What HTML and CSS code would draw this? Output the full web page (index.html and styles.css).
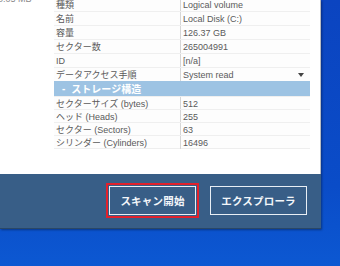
FILE: index.html
```html
<!DOCTYPE html>
<html lang="ja">
<head>
<meta charset="utf-8">
<link rel="stylesheet" href="styles.css">
</head>
<body>
<div class="window">
  <div class="content">
    <div class="side"><span class="size">0.05 MB</span></div>
    <div class="props">
      <div class="row top"><div class="k">種類</div><div class="v">Logical volume</div></div>
      <div class="row top"><div class="k">名前</div><div class="v">Local Disk (C:)</div></div>
      <div class="row top"><div class="k">容量</div><div class="v">126.37 GB</div></div>
      <div class="row top"><div class="k">セクター数</div><div class="v">265004991</div></div>
      <div class="row top"><div class="k">ID</div><div class="v">[n/a]</div></div>
      <div class="row top"><div class="k">データアクセス手順</div><div class="v sel">System read<svg class="arrow" width="6" height="4" viewBox="0 0 6 4"><path d="M0 0h6L3 4z" fill="#444"/></svg></div></div>
      <div class="group"><span class="minus">-</span><span>ストレージ構造</span></div>
      <div class="row"><div class="k">セクターサイズ (bytes)</div><div class="v">512</div></div>
      <div class="row"><div class="k">ヘッド (Heads)</div><div class="v">255</div></div>
      <div class="row"><div class="k">セクター (Sectors)</div><div class="v">63</div></div>
      <div class="row"><div class="k">シリンダー (Cylinders)</div><div class="v">16496</div></div>
    </div>
  </div>
  <div class="footer">
    <button class="btn focused">スキャン開始</button>
    <button class="btn wide">エクスプローラ</button>
  </div>
</div>
</body>
</html>
```

FILE: styles.css
```css
html, body {
  margin: 0;
  padding: 0;
}
body {
  width: 340px;
  height: 266px;
  overflow: hidden;
  background: linear-gradient(180deg, #0b44c0 0%, #0a4cc8 70%, #0c58d2 100%);
  font-family: "Liberation Sans", "Noto Sans CJK JP", sans-serif;
  font-size: 9px;
  color: #5a5a5a;
}
.window {
  width: 321px;
  display: flex;
  flex-direction: column;
  box-shadow: 1px 1px 2px rgba(0, 0, 0, 0.35);
}
.content {
  height: 174px;
  background: #fff;
  border-right: 1px solid #b9bcc2;
  display: flex;
  overflow: hidden;
}
.side {
  width: 54px;
  flex: none;
}
.size {
  display: block;
  margin-top: -6px;
  margin-left: -2px;
  color: #8a8a8a;
  line-height: 11px;
}
.props {
  width: 256px;
  margin-top: -3px;
  display: flex;
  flex-direction: column;
  align-self: flex-start;
  border-bottom: 1px solid #eeeeee;
}
.row {
  display: grid;
  grid-template-columns: 127px 1fr;
  height: 13px;
  border-top: 1px solid #efefef;
  box-sizing: border-box;
  background: #fdfdfd;
}
.row.top {
  height: 14px;
}
.k {
  padding-left: 2px;
  border-right: 1px solid #d6d6d6;
  display: flex;
  align-items: center;
  white-space: nowrap;
}
.v {
  padding-left: 2px;
  display: flex;
  align-items: center;
  white-space: nowrap;
}
.sel {
  justify-content: space-between;
  padding-right: 6px;
}
.arrow {
  display: block;
}
.group {
  height: 15px;
  background: #9dc3e3;
  color: #fff;
  font-weight: bold;
  font-size: 10px;
  display: flex;
  align-items: center;
  gap: 6px;
  padding-left: 8px;
}
.minus {
  font-weight: bold;
}
.footer {
  height: 55px;
  background: #385e87;
  border-bottom: 1px solid #2a4766;
  box-sizing: border-box;
  display: flex;
  justify-content: flex-end;
  align-items: flex-start;
  gap: 14px;
  padding: 12px 14px 0 0;
}
.btn {
  width: 87px;
  height: 29px;
  margin: 0;
  padding: 0;
  background: #385e87;
  border: 1.5px solid #e8eef5;
  color: #f3f6fa;
  font-family: "Noto Sans CJK JP", sans-serif;
  font-size: 10.5px;
  font-weight: bold;
  letter-spacing: 0.2px;
}
.btn.wide {
  width: 97px;
}
.focused {
  outline: 2px solid #e0212c;
  outline-offset: 1px;
}
```
